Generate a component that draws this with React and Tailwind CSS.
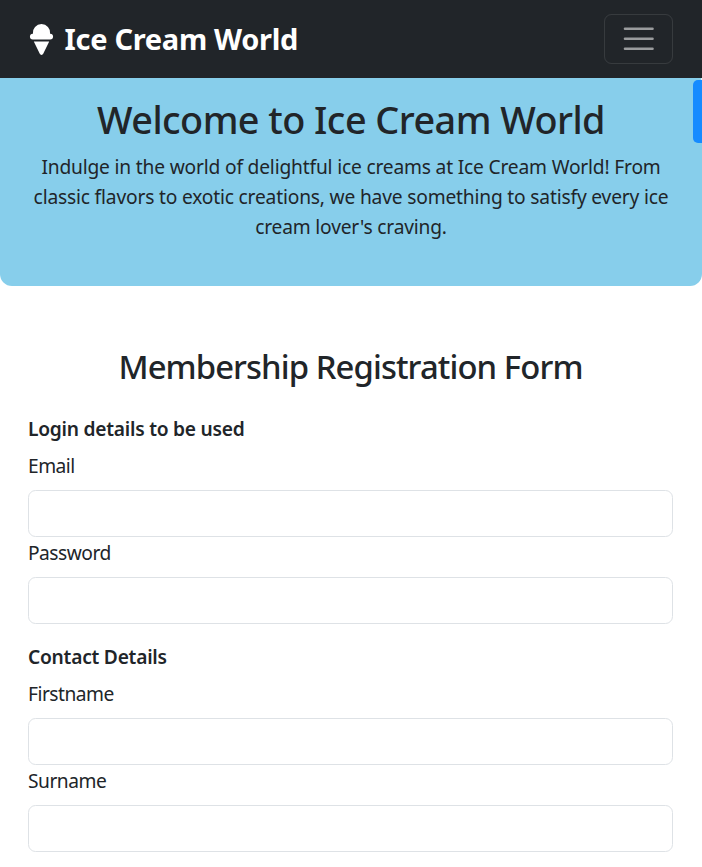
import React from "react";

function Field({ label, type = "text" }) {
  const id = label.toLowerCase();
  return (
    <div className="mb-px">
      <label htmlFor={id} className="mb-[9px] block leading-[30px] tracking-[-0.5px]">
        {label}
      </label>
      <input
        id={id}
        type={type}
        className="block h-[47px] w-full rounded-[7.5px] border border-[#dee2e6] bg-white px-[15px] outline-none"
      />
    </div>
  );
}

function Section({ title, children }) {
  return (
    <fieldset className="mb-[17px]">
      <h3 className="mb-[7px] text-[19.2px] font-semibold leading-[30px] tracking-[-0.24px]">{title}</h3>
      {children}
    </fieldset>
  );
}

export default function App() {
  return (
    <div className="relative h-[867px] overflow-hidden bg-white font-['Noto_Sans','Open_Sans',sans-serif] text-[19.2px] tracking-[-0.18px] text-[#212529]">
      <nav className="flex h-[78px] items-center justify-between bg-[#212529] pr-[29px] pl-[27.5px]">
        <a className="flex items-center text-white">
          <svg viewBox="0 0 448 512" className="h-[31px] w-[27px]" fill="currentColor">
            <path d="M368 160h-.94a144 144 0 1 0-286.12 0H80a48 48 0 0 0 0 96h288a48 48 0 0 0 0-96zM195.38 493.69a31.52 31.52 0 0 0 57.24 0L352 288H96z" />
          </svg>
          <span className="ml-[10px] text-[29px] font-bold leading-[44px] tracking-[-0.3px] whitespace-nowrap">
            Ice Cream World
          </span>
        </a>
        <button className="flex h-[50px] w-[69px] items-center justify-center rounded-[7.5px] border border-white/10">
          <svg viewBox="0 0 30 30" className="size-[37.5px]" fill="none">
            <path stroke="white" strokeOpacity="0.55" strokeLinecap="round" strokeMiterlimit="10" strokeWidth="2.1" d="M4 7h22M4 15h22M4 23h22" />
          </svg>
        </button>
      </nav>

      <header className="h-[208px] rounded-b-xl bg-[#87ceeb] px-5 pt-[18px] text-center">
        <h1 className="mb-2 text-[37.8px] font-medium leading-[48px] tracking-[-0.55px] whitespace-nowrap">Welcome to Ice Cream World</h1>
        <p className="leading-[30px]">
          Indulge in the world of delightful ice creams at Ice Cream World! From
          <br />
          classic flavors to exotic creations, we have something to satisfy every ice
          <br />
          cream lover's craving.
        </p>
      </header>

      <main className="pt-[60px] pr-[29px] pl-7">
        <h2 className="mb-[27px] text-center text-[32.8px] font-medium leading-[41px] tracking-[-0.9px]">Membership Registration Form</h2>
        <Section title="Login details to be used">
          <Field label="Email" type="email" />
          <Field label="Password" type="password" />
        </Section>
        <Section title="Contact Details">
          <Field label="Firstname" />
          <Field label="Surname" />
        </Section>
      </main>

      <div className="absolute top-[78px] right-0 h-[2px] w-px bg-white/70" />
      <div className="absolute top-20 right-0 h-[63px] w-[9px] rounded-l-[5px] bg-[#168bff]" />
    </div>
  );
}
